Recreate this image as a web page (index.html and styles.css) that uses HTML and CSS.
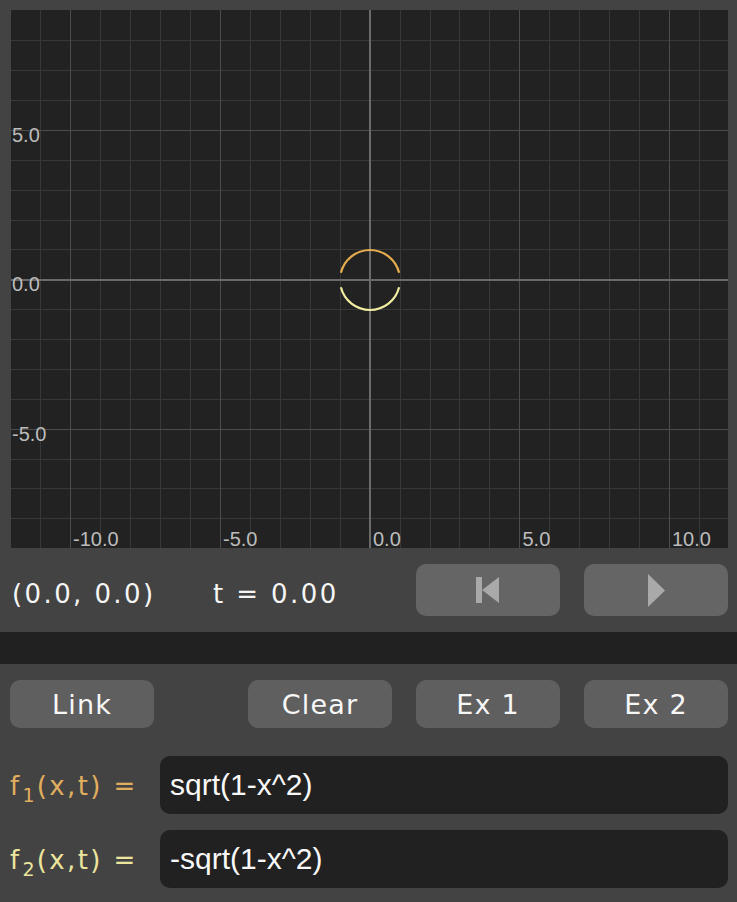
FILE: index.html
```html
<!DOCTYPE html>
<html lang="en">
<head>
<meta charset="utf-8">
<title>Function Plotter</title>
<link rel="stylesheet" href="styles.css">
</head>
<body>
<div class="app">
  <div class="plot-area">
    <svg class="plot" width="717" height="538" viewBox="0 0 717 538" xmlns="http://www.w3.org/2000/svg">
      <rect class="plot-bg" x="0" y="0" width="717" height="538"/>
      <g class="grid-minor">
        <path d="M29.5 0V538M89.5 0V538M119.5 0V538M149.5 0V538M179.5 0V538M239.5 0V538M269.5 0V538M299.5 0V538M329.5 0V538M389.5 0V538M419.5 0V538M448.5 0V538M478.5 0V538M538.5 0V538M568.5 0V538M598.5 0V538M628.5 0V538M688.5 0V538"/>
        <path d="M0 30.5H717M0 60.5H717M0 90.5H717M0 150.5H717M0 180.5H717M0 210.5H717M0 239.5H717M0 299.5H717M0 329.5H717M0 359.5H717M0 389.5H717M0 449.5H717M0 478.5H717M0 508.5H717"/>
      </g>
      <g class="grid-major">
        <path d="M59.5 0V538M209.5 0V538M508.5 0V538M658.5 0V538"/>
        <path d="M0 120.5H717M0 419.5H717"/>
      </g>
      <g class="axes">
        <rect x="358" y="0" width="2" height="538"/>
        <rect x="0" y="269" width="717" height="2"/>
      </g>
      <g class="tick-labels">
        <text x="1" y="131.5">5.0</text>
        <text x="1" y="281">0.0</text>
        <text x="1" y="430.5">-5.0</text>
        <text x="62" y="536">-10.0</text>
        <text x="212" y="536">-5.0</text>
        <text x="362" y="536">0.0</text>
        <text x="511.5" y="536">5.0</text>
        <text x="661" y="536">10.0</text>
      </g>
      <path class="curve curve-1" d="M329.9 262.7A30 30 0 0 1 388.1 262.7"/>
      <path class="curve curve-2" d="M329.9 277.3A30 30 0 0 0 388.1 277.3"/>
    </svg>
  </div>

  <div class="status">
    <div class="readout">
      <span class="coords">(0.0, 0.0)</span>
      <span class="time">t = 0.00</span>
    </div>
    <button class="btn btn-status" type="button" aria-label="Reset">
      <svg width="24" height="26" viewBox="0 0 24 26"><rect x="0" y="0" width="6" height="26"/><path d="M23 0V26L6 13Z"/></svg>
    </button>
    <button class="btn btn-status" type="button" aria-label="Play">
      <svg width="17" height="33" viewBox="0 0 17 33"><path d="M0 0L17 16.5L0 33Z"/></svg>
    </button>
  </div>

  <div class="divider"></div>

  <div class="controls">
    <div class="btn-row">
      <button class="btn btn-action" type="button">Link</button>
      <button class="btn btn-action btn-push" type="button">Clear</button>
      <button class="btn btn-action" type="button">Ex 1</button>
      <button class="btn btn-action" type="button">Ex 2</button>
    </div>
    <div class="func-row">
      <div class="func-label func-1"><span class="func-text">f<span class="sub">1</span>(x,t) =</span></div>
      <div class="field">sqrt(1-x^2)</div>
    </div>
    <div class="func-row">
      <div class="func-label func-2"><span class="func-text">f<span class="sub">2</span>(x,t) =</span></div>
      <div class="field">-sqrt(1-x^2)</div>
    </div>
  </div>
</div>
</body>
</html>
```

FILE: styles.css
```css
html, body {
  margin: 0;
  padding: 0;
  background: #434343;
}

.app {
  width: 737px;
  height: 902px;
  background: #434343;
  font-family: "DejaVu Sans", sans-serif;
  color: #f4f4f4;
  overflow: hidden;
}

.plot-area {
  padding: 10px 9px 0 11px;
  height: 538px;
}

.plot {
  display: block;
  overflow: visible;
}

.plot-bg {
  fill: #222222;
}

.grid-minor path {
  stroke: #383838;
  stroke-width: 1;
  fill: none;
}

.grid-major path {
  stroke: #4c4c4c;
  stroke-width: 1;
  fill: none;
}

.axes rect {
  fill: #6a6a6a;
}

.tick-labels text {
  font-family: "Liberation Sans", Arial, sans-serif;
  font-size: 20px;
  fill: #bcbcbc;
}

.curve {
  fill: none;
  stroke-width: 2.2;
  stroke-linecap: butt;
}

.curve-1 {
  stroke: #e6ad4f;
}

.curve-2 {
  stroke: #f3eda2;
}

.status {
  height: 52px;
  padding: 16px 9px 16px 12px;
  display: grid;
  grid-template-columns: 1fr 144px 144px;
  column-gap: 24px;
}

.readout {
  display: flex;
  align-items: center;
  padding-top: 7px;
  font-size: 26px;
  letter-spacing: 2.4px;
  color: #f6f6f6;
}

.coords {
  width: 201px;
}

.btn {
  border: none;
  margin: 0;
  padding: 0;
  font: inherit;
  color: #f7f7f7;
  border-radius: 10px;
  display: flex;
  align-items: center;
  justify-content: center;
}

.btn-status {
  background: #656565;
  height: 52px;
}

.btn-status svg {
  fill: #a9a9a9;
  display: block;
}

.divider {
  height: 32px;
  background: #212121;
}

.controls {
  padding: 16px 9px 0 10px;
}

.btn-row {
  display: flex;
  gap: 24px;
  height: 48px;
}

.btn-action {
  width: 144px;
  height: 48px;
  background: #5f5f5f;
  font-size: 27px;
  letter-spacing: 1.2px;
}

.btn-push {
  margin-left: auto;
}

.func-row {
  display: grid;
  grid-template-columns: 150px 1fr;
  height: 58px;
  margin-top: 16px;
}

.btn-row + .func-row {
  margin-top: 28px;
}

.func-label {
  display: flex;
  align-items: center;
  font-size: 26px;
  letter-spacing: 2.4px;
  white-space: nowrap;
  padding-top: 2px;
}

.func-text {
  display: block;
}

.func-label .sub {
  font-size: 19px;
  position: relative;
  top: 7px;
  letter-spacing: 0;
  margin-left: 1px;
  margin-right: 2px;
}

.func-1 {
  color: #e0ae5e;
}

.func-2 {
  color: #ebe59d;
}

.field {
  background: #212121;
  border-radius: 10px;
  display: flex;
  align-items: center;
  padding-left: 10px;
  font-family: "Liberation Sans", Arial, sans-serif;
  font-size: 30px;
  color: #f8f8f8;
}
```
